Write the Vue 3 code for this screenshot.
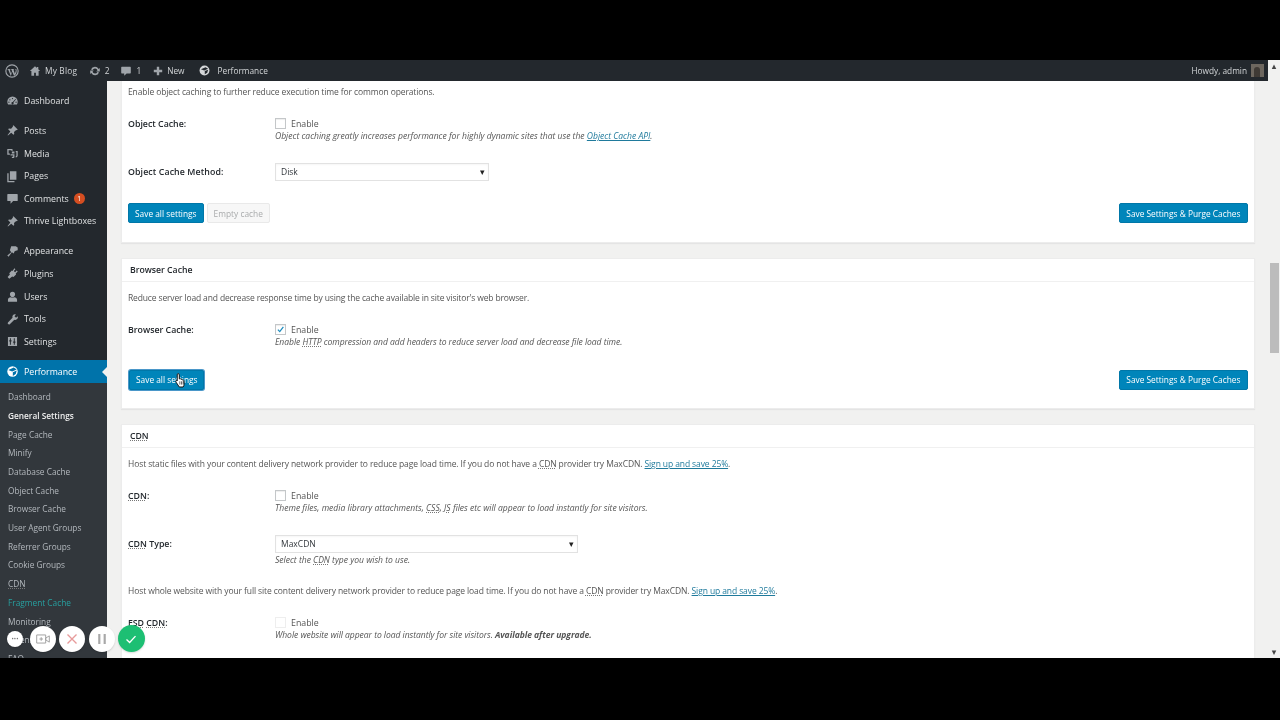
<script setup>
const top = [
  { t: 'Dashboard', i: 'dash', g: 18 },
  { t: 'Posts', i: 'pin' },
  { t: 'Media', i: 'media' },
  { t: 'Pages', i: 'pages' },
  { t: 'Comments', i: 'bubble', badge: 1 },
  { t: 'Thrive Lightboxes', i: 'pin' },
  { t: 'Appearance', i: 'brush', g: 1 },
  { t: 'Plugins', i: 'plug' },
  { t: 'Users', i: 'user' },
  { t: 'Tools', i: 'wrench' },
  { t: 'Settings', i: 'sliders' },
]
const icons = {
  dash: 'M10 4a8 8 0 0 0-8 8c0 1.6.5 3 1.2 4h13.6c.7-1 1.2-2.400 1.200-4a8 8 0 0 0-8-8zm0 2a1 1 0 1 1 0 2 1 1 0 0 1 0-2zM6 8a1 1 0 1 1 0 2 1 1 0 0 1 0-2zm8.500-.5.9.6-3.900 5a1.700 1.700 0 1 1-1-.7zM4.500 11.500a1 1 0 1 1 0 2 1 1 0 0 1 0-2zm11 0a1 1 0 1 1 0 2 1 1 0 0 1 0-2z',
  pin: 'M11.500 2 18 8.500l-1.300 1.300-1-.6-3.400 3 .4 3.300-1.200 1.200-3.400-3.400L3 17.500l-.5-.5 4.200-5.500-3.400-3.400L4.500 7l3.300.4 3-3.400-.6-1z',
  media: 'M2 3h8v3H8.500V5H4v5h2v2H2zm7 4h4v3H9zm-2 4h6v4c0 1-.8 2-2 2H9v-2h2v-2H7zm8-5h3v7c0 1.500-1 3-3 3v-2c.7 0 1-.5 1-1V8h-1z',
  pages: 'M6 2h10v13H6zM4 5v12h9v2H2V5z',
  bubble: 'M3 3h14a1 1 0 0 1 1 1v9a1 1 0 0 1-1 1h-6l-4 4v-4H3a1 1 0 0 1-1-1V4a1 1 0 0 1 1-1z',
  brush: 'M8 2h7l3 2v4l-3 1-2 1-1 3-3-2-5 7-2-2 6-5-2-3 1-3z',
  plug: 'M13 2l1.500 1.500L12 6l2 2 2.500-2.500L18 7l-3 3 .5 1.500-4 4-2-1L5 18l-2.500-2.500L6 11.500l-1-2 4-4 1 .5z',
  user: 'M10 2.500a4 4 0 0 1 4 4c0 2.500-1.800 4.500-4 4.500S6 9 6 6.500a4 4 0 0 1 4-4zM3 15c0-2 2-3.500 4-3.800 1.800 1 4.200 1 6 0 2 .3 4 1.800 4 3.800v3H3z',
  wrench: 'M14 2a4 4 0 0 0-4 5.300L3 14.500a2 2 0 0 0 2.800 2.800l7-7A4 4 0 0 0 18 5l-2.500 2.300L13 5l2.300-2.800A4 4 0 0 0 14 2z',
  sliders: 'M3 3h14v14H3zm3 2v3H5v2h1v5h1.500v-5h1V8h-1V5zm6 0v5h-1v2h1v3h1.500v-3h1v-2h-1V5z',
}
const subs = ['Dashboard', 'General Settings', 'Page Cache', 'Minify', 'Database Cache', 'Object Cache', 'Browser Cache', 'User Agent Groups', 'Referrer Groups', 'Cookie Groups', 'CDN', 'Fragment Cache', 'Monitoring', 'Extensions', 'FAQ']
</script>

<template>
  <div class="screen">
    <div class="band"></div>
    <div class="wp">
      <div class="left">
        <header class="bar">
          <div class="bar-group">
            <svg class="wplogo" viewBox="0 0 20 20"><circle cx="10" cy="10" r="8.800" fill="none" stroke="#a0a5aa" stroke-width="1.600"/><path d="M3.500 7h4.300v.7l-1 .2 2 6 1.300-3.700-.8-2.300-.8-.2V7h4.500v.7l-1 .2 2.100 6 1.200-3.900c.4-1.500-.2-2.300-.7-3h1.500c1 2.500.5 5-.7 7.500L13 17l-2.500-6-2.200 6L4.500 7.900l-1-.2z" fill="#a0a5aa"/></svg>
            <svg class="ico home" viewBox="0 0 20 20"><path d="M10 2 1.500 10H4v8h4.500v-5h3v5H16v-8h2.500L15.500 7.200V3.500h-2.500v1.300z"/></svg>
            <span class="b-txt blog">My Blog</span>
            <svg class="ico upd" viewBox="0 0 20 20"><path d="M10 3a7 7 0 0 1 6 3.500L18 5v6h-6l2.200-2.200A4.500 4.500 0 0 0 6 8.500L3.300 7.500A7 7 0 0 1 10 3zM2 9h6l-2.200 2.200a4.500 4.500 0 0 0 8.200.3l2.700 1A7 7 0 0 1 4 13.500L2 15z"/></svg>
            <span class="b-txt n1">2</span>
            <svg class="ico cm" viewBox="0 0 20 20"><path :d="icons.bubble"/></svg>
            <span class="b-txt n2">1</span>
            <svg class="ico plus" viewBox="0 0 20 20"><path d="M8 3h4v5h5v4h-5v5H8v-5H3V8h5z"/></svg>
            <span class="b-txt new">New</span>
            <svg class="ico perf" viewBox="0 0 20 20"><path d="M10 1a9 9 0 1 0 0 18 9 9 0 0 0 0-18z" fill="#d5d7d9"/><path d="M3.500 7.500 12 4l4.500 3-7 3zM10.500 11 16.500 8.500 15 14l-4.500 3z" fill="#23282d"/></svg>
            <span class="b-txt">Performance</span>
          </div>
          <div class="bar-group">
            <span class="b-txt howdy">Howdy, admin</span>
            <span class="avatar"><i></i></span>
          </div>
        </header>

        <div class="body">
          <nav class="side">
            <template v-for="m in top" :key="m.t">
              <div class="item" :class="m.g === 1 ? 'gap' : m.g === 18 ? 'first' : ''">
                <svg class="mico" viewBox="0 0 20 20"><path :d="icons[m.i]"/></svg>
                <span>{{ m.t }}</span>
                <em v-if="m.badge" class="badge">{{ m.badge }}</em>
              </div>
            </template>
            <div class="item cur">
              <svg class="mico" viewBox="0 0 20 20"><circle cx="10" cy="10" r="8" fill="#fff"/><path d="M3.500 7.500 12 4l4.500 3-7 3zM10.500 11 16.500 8.500 15 14l-4.500 3z" fill="#0073aa"/></svg>
              <span>Performance</span>
            </div>
            <div class="subs">
              <div v-for="s in subs" :key="s" class="sub" :class="{ on: s === 'General Settings', frag: s === 'Fragment Cache' }">
                <abbr v-if="s === 'CDN'">CDN</abbr><template v-else>{{ s }}</template>
              </div>
            </div>
          </nav>

          <main class="content">
            <section class="card c1">
              <p class="lead">Enable object caching to further reduce execution time for common operations.</p>
              <div class="row r-obj">
                <label class="lbl">Object Cache:</label>
                <div class="ctl">
                  <div class="chk-line"><span class="chk"></span>Enable</div>
                  <p class="desc">Object caching greatly increases performance for highly dynamic sites that use the <a>Object Cache API</a>.</p>
                </div>
              </div>
              <div class="row r-method">
                <label class="lbl wide">Object Cache Method:</label>
                <div class="select s-disk">Disk<i>▾</i></div>
              </div>
              <div class="actions a1">
                <div class="left-btns"><button class="btn">Save all settings</button><button class="btn ghost">Empty cache</button></div>
                <button class="btn">Save Settings &amp; Purge Caches</button>
              </div>
            </section>

            <section class="card c2">
              <h3 class="head">Browser Cache</h3>
              <p class="lead l2">Reduce server load and decrease response time by using the cache available in site visitor's web browser.</p>
              <div class="row r-bc">
                <label class="lbl">Browser Cache:</label>
                <div class="ctl">
                  <div class="chk-line"><span class="chk"><svg viewBox="0 0 12 12"><path d="M2.500 6.200 5 8.800 9.800 2.500" fill="none" stroke="#1e8cbe" stroke-width="1.700"/></svg></span>Enable</div>
                  <p class="desc tight">Enable <abbr>HTTP</abbr> compression and add headers to reduce server load and decrease file load time.</p>
                </div>
              </div>
              <div class="actions a2">
                <button class="btn focus">Save all settings</button>
                <button class="btn">Save Settings &amp; Purge Caches</button>
              </div>
            </section>

            <section class="card c3">
              <h3 class="head"><abbr>CDN</abbr></h3>
              <p class="lead l2">Host static files with your content delivery network provider to reduce page load time. If you do not have a <abbr>CDN</abbr> provider try MaxCDN. <a>Sign up and save 25%</a>.</p>
              <div class="row r-cdn">
                <label class="lbl"><abbr>CDN</abbr>:</label>
                <div class="ctl">
                  <div class="chk-line"><span class="chk"></span>Enable</div>
                  <p class="desc">Theme files, media library attachments, <abbr>CSS</abbr>, <abbr>JS</abbr> files etc will appear to load instantly for site visitors.</p>
                </div>
              </div>
              <div class="row r-type">
                <label class="lbl"><abbr>CDN</abbr> Type:</label>
                <div class="ctl">
                  <div class="select s-cdn">MaxCDN<i>▾</i></div>
                  <p class="desc d-type">Select the <abbr>CDN</abbr> type you wish to use.</p>
                </div>
              </div>
              <p class="lead l3">Host whole website with your full site content delivery network provider to reduce page load time. If you do not have a <abbr>CDN</abbr> provider try MaxCDN. <a>Sign up and save 25%</a>.</p>
              <div class="row r-fsd">
                <label class="lbl"><abbr>FSD</abbr> <abbr>CDN</abbr>:</label>
                <div class="ctl">
                  <div class="chk-line faint"><span class="chk"></span>Enable</div>
                  <p class="desc tight">Whole website will appear to load instantly for site visitors. <b>Available after upgrade.</b></p>
                </div>
              </div>
            </section>
          </main>
        </div>
      </div>

      <aside class="scroll">
        <span class="arrow">▴</span>
        <div class="thumb"></div>
        <span class="arrow down">▾</span>
      </aside>

      <div class="rec">
        <span class="dot small">···</span>
        <span class="dot"><svg viewBox="0 0 20 20"><path d="M3 5.500h10v9H3zM13 9l4-2.500v7L13 11zM8 8v4M6 10h4" fill="none" stroke="#9a9a9a" stroke-width="1"/></svg></span>
        <span class="dot"><svg viewBox="0 0 20 20"><path d="M5 5l10 10M15 5 5 15" stroke="#e79a9a" stroke-width="1.500"/></svg></span>
        <span class="dot"><svg viewBox="0 0 20 20"><path d="M7 4.500v11M13 4.500v11" stroke="#a8a8a8" stroke-width="2.400"/></svg></span>
        <span class="dot ok"><svg viewBox="0 0 20 20"><path d="M5 10.500l3.500 3.300L15 6.800" fill="none" stroke="#fff" stroke-width="1.500"/></svg></span>
      </div>

      <svg class="cursor" viewBox="0 0 16 20"><path d="M5 1.500c1 0 1.500.6 1.500 1.500v5l1-.2c.6 0 1 .3 1.200.7.700-.2 1.400 0 1.600.6.800-.2 1.700.2 1.800 1l.4 4.400c0 1.500-.6 2.500-1.300 3.500H6.500L2.500 12c-.6-.8-.3-1.600.3-1.800.6-.2 1.200 0 1.200.4V3c0-1 .4-1.500 1-1.500z" fill="#fff" stroke="#111" stroke-width="1.200"/><path d="M7.200 11v4M9.300 11v4M11.300 11v4" stroke="#111" stroke-width=".8"/></svg>
    </div>
    <div class="band"></div>
  </div>
</template>

<style>
html, body { margin: 0; background: #000; }
</style>

<style scoped>
.screen { width: 1280px; height: 720px; display: flex; flex-direction: column; overflow: hidden; background: #000; font-family: "Open Sans", "Noto Sans", sans-serif; }
.band { height: 60px; flex: none; background: #000; }
.band:last-child { height: 62px; }
.wp { position: relative; height: 598px; display: flex; overflow: hidden; background: #f1f1f0; filter: blur(.3px); }
.left { width: 1268px; display: flex; flex-direction: column; }
.bar { height: 21px; flex: none; background: #23282d; display: flex; justify-content: space-between; align-items: center; padding: 0 4px 0 5px; }
.bar-group { display: flex; align-items: center; }
.b-txt { font-size: 8.300px; color: #d3d6d8; white-space: nowrap; }
.wplogo { width: 14px; height: 14px; margin-right: 10px; }
.ico { width: 12px; height: 12px; fill: #a0a5aa; flex: none; }
.home { margin-right: 4px; }
.blog { margin-right: 11.600px; letter-spacing: .2px; }
.upd { margin-right: 4px; }
.n1 { margin-right: 11px; }
.cm { margin-right: 4px; }
.n2 { margin-right: 11px; }
.plus { margin-right: 3px; }
.new { margin-right: 14px; }
.perf { margin-right: 8px; width: 11px; height: 11px; }
.howdy { margin-right: 4px; }
.avatar { width: 13px; height: 13px; background: #6d675f; display: block; position: relative; overflow: hidden; }
.avatar i { position: absolute; left: 3px; top: 3px; width: 6px; height: 10px; background: #3f3a35; border-radius: 3px 3px 0 0; }

.body { flex: 1; display: flex; min-height: 0; }
.side { width: 107px; flex: none; background: #23282d; }
.item { height: 22.600px; display: flex; align-items: center; font-size: 8.800px; color: #dfe1e2; position: relative; white-space: nowrap; }
.item.first { margin-top: 8.700px; margin-bottom: 7.400px; }
.item.gap { margin-top: 7.400px; }
.mico { width: 13px; height: 13px; margin: 0 5px 0 6px; fill: #a0a5aa; flex: none; }
.badge { margin-left: 5px; width: 11px; height: 11px; border-radius: 50%; background: #d54e21; color: #fff; font-size: 7px; font-style: normal; display: flex; align-items: center; justify-content: center; }
.cur { background: #0073aa; color: #fff; margin-top: 7.400px; }
.cur::after { content: ""; position: absolute; right: 0; top: 7px; border: 5px solid transparent; border-right-color: #f1f1f0; border-left-width: 0; }
.subs { background: #32373c; padding-top: 5.300px; }
.sub { height: 18.700px; line-height: 18.700px; padding-left: 8px; font-size: 8.300px; color: #b4b9be; white-space: nowrap; }
.sub.on { color: #eee; font-weight: 600; }
.sub.frag { color: #27a0a0; }

.content { flex: 1; padding: 0 13px 0 14px; overflow: hidden; min-width: 0; color: #555; font-size: 8.500px; }
.card { background: #fff; border: 1px solid #ececec; border-top: 0; padding: 0 6px; box-sizing: border-box; box-shadow: 0 1px 1px #e4e4e4; }
.c1 { height: 162px; margin-bottom: 15px; }
.c2 { height: 151px; border-top: 1px solid #ececec; margin-bottom: 15px; }
.c3 { height: 300px; border-top: 1px solid #ececec; }
p { margin: 0; }
.lead { height: 12px; line-height: 12px; white-space: nowrap; letter-spacing: -.115px; }
.c2 .lead { letter-spacing: -.145px; }
.c3 .lead { letter-spacing: -.1px; }
.c1 .lead { padding-top: 5px; height: 12px; }
.head { margin: 0 -6px; height: 22px; line-height: 22px; padding-left: 8px; font-size: 8.700px; font-weight: 600; color: #23282d; border-bottom: 1px solid #f0f0f0; }
.l2 { margin-top: 10px; }
.l3 { margin-top: 19px; }
.row { display: flex; align-items: flex-start; }
.lbl { width: 147px; flex: none; font-weight: 600; color: #23282d; font-size: 8.800px; line-height: 12px; white-space: nowrap; }
.lbl.wide { letter-spacing: .1px; }
.ctl { min-width: 0; }
.chk-line { display: flex; align-items: center; height: 12px; line-height: 12px; color: #555; font-size: 8.800px; }
.chk { width: 9px; height: 9px; border: 1px solid #c4c7c9; margin: 0 5px 1px 0; display: block; flex: none; box-shadow: inset 0 1px 1px #eee; }
.chk svg { display: block; width: 9px; height: 9px; }
.faint .chk { border-color: #eee; box-shadow: none; }
.desc { font-style: italic; line-height: 12px; white-space: nowrap; font-size: 8.550px; }
.desc.tight { letter-spacing: -.045px; }
.desc b { font-weight: 700; }
a { color: #1f7a9c; text-decoration: underline; }
abbr { text-decoration: underline dotted #777; text-underline-offset: 1px; }
.select { box-sizing: border-box; height: 18px; border: 1px solid #e2e2e2; padding-left: 5px; line-height: 16px; color: #32373c; position: relative; box-shadow: inset 0 1px 2px rgba(0,0,0,.04); }
.select i { position: absolute; right: 3px; top: 0; font-style: normal; font-size: 9px; color: #222; }
.s-disk { width: 214px; }
.s-cdn { width: 303px; }
.r-obj { margin-top: 20px; }
.r-method { margin-top: 20.500px; align-items: center; }
.actions { display: flex; justify-content: space-between; align-items: center; }
.a1 { margin-top: 22.500px; }
.a2 { margin-top: 21.500px; }
.left-btns { display: flex; gap: 3px; }
.btn { box-sizing: border-box; height: 20px; padding: 0 6.500px; border: 1px solid #0077a8; border-radius: 2px; background: #0085ba; color: #fff; font: 8.350px "Open Sans", sans-serif; white-space: nowrap; margin: 0; }
.left-btns .btn { padding: 0 6px; }
.ghost { background: #f7f7f7; border-color: #e9e9e9; color: #a9abac; }
.focus { box-shadow: 0 0 0 1px #4a97c9; margin-left: 1px; padding: 0 5px 0 6px; }
.r-bc { margin-top: 20px; }
.r-cdn { margin-top: 20px; }
.r-type { margin-top: 21px; }
.r-type .lbl { margin-top: 3px; }
.d-type { margin-top: 1px; }
.r-fsd { margin-top: 20px; }

.scroll { width: 12px; flex: none; position: relative; }
.arrow { position: absolute; right: 1px; top: 0; width: 10px; text-align: center; font: 9px/12px "DejaVu Sans", sans-serif; color: #444; }
.arrow.down { top: auto; bottom: 0; }
.thumb { position: absolute; right: 1px; top: 203px; width: 9px; height: 90px; background: #bcbcbc; }

.rec { position: absolute; left: 7px; top: 565px; display: flex; align-items: center; gap: 3.200px; }
.dot { width: 26px; height: 26px; border-radius: 50%; background: #fff; display: flex; align-items: center; justify-content: center; box-shadow: 0 1px 2px rgba(0,0,0,.15); color: #777; font-size: 8px; }
.dot svg { width: 18px; height: 18px; }
.dot.small { width: 16px; height: 16px; margin-right: 4px; font-weight: 700; }
.dot.ok { width: 27px; height: 27px; background: #1dbf73; margin-left: 0; }
.cursor { position: absolute; left: 174px; top: 312px; width: 13px; height: 17px; }
</style>
